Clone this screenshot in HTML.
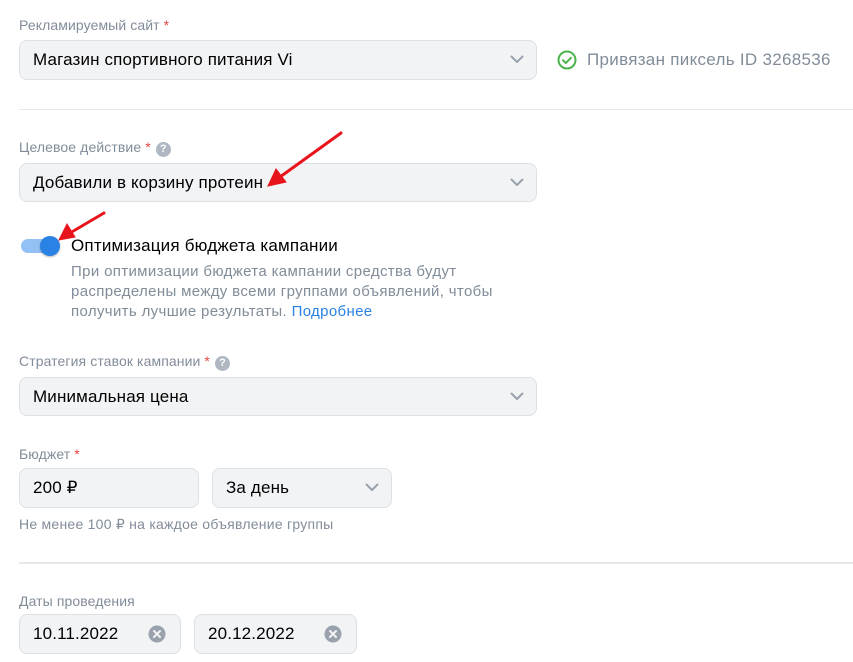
<!DOCTYPE html>
<html><head><meta charset="utf-8"><style>
body{margin:0;width:853px;height:662px;background:#fff;font-family:"Liberation Sans",sans-serif;position:relative;overflow:hidden}
.a{position:absolute}
.lbl{font-size:14px;color:#818c99;white-space:nowrap;letter-spacing:0.1px}
.req{color:#e64646}
.box{position:absolute;box-sizing:border-box;background:#f2f3f5;border:1px solid #dce1e6;border-radius:8px;font-size:17px;letter-spacing:0.15px;color:#000;padding-left:13px;display:flex;align-items:center}
.chev{position:absolute;right:12px;top:50%;margin-top:-5px}
.q{display:inline-block;width:15px;height:15px;border-radius:50%;background:#aeb7c2;color:#fff;font-size:11px;font-weight:bold;text-align:center;line-height:15px;vertical-align:0px;margin-left:5px;letter-spacing:0}
.x{position:absolute;right:14px;top:50%;margin-top:-9px}
.div{position:absolute;left:19px;right:0;height:1px;background:#e7e8ec}
</style></head><body>
<div class="a lbl" style="left:19px;top:17px">Рекламируемый сайт <span class="req">*</span></div>
<div class="box" style="left:19px;top:40px;width:518px;height:40px">Магазин спортивного питания Vi<svg class="chev" width="14" height="9" viewBox="0 0 14 9"><path d="M1.5 1.5L7 7l5.5-5.5" fill="none" stroke="#99a2ad" stroke-width="2" stroke-linecap="round" stroke-linejoin="round"/></svg></div>
<svg class="a" style="left:557px;top:50px" width="20" height="20" viewBox="0 0 20 20"><circle cx="10" cy="10" r="8.5" fill="none" stroke="#4bb34b" stroke-width="2"/><path d="M6 10.2l2.8 2.8L14 7.8" fill="none" stroke="#4bb34b" stroke-width="2" stroke-linecap="round" stroke-linejoin="round"/></svg>
<div class="a" style="left:587px;top:50px;font-size:17px;letter-spacing:0.3px;color:#818c99;white-space:nowrap">Привязан пиксель ID 3268536</div>
<div class="div" style="top:109px"></div>
<div class="a lbl" style="left:19px;top:139px">Целевое действие <span class="req">*</span><span class="q">?</span></div>
<div class="box" style="left:19px;top:163px;width:518px;height:39px">Добавили в корзину протеин<svg class="chev" width="14" height="9" viewBox="0 0 14 9"><path d="M1.5 1.5L7 7l5.5-5.5" fill="none" stroke="#99a2ad" stroke-width="2" stroke-linecap="round" stroke-linejoin="round"/></svg></div>
<div class="a" style="left:21px;top:239px;width:36px;height:14px;border-radius:7px;background:#93c1f5"></div>
<div class="a" style="left:40px;top:236px;width:20px;height:20px;border-radius:50%;background:#2a82e4;box-shadow:0 1px 2px rgba(0,0,0,.3)"></div>
<div class="a" style="left:71px;top:236px;font-size:17px;letter-spacing:0.2px;color:#000;white-space:nowrap">Оптимизация бюджета кампании</div>
<div class="a" style="left:71px;top:262px;font-size:15px;letter-spacing:0.35px;line-height:20px;color:#818c99;width:450px">При оптимизации бюджета кампании средства будут распределены между всеми группами объявлений, чтобы получить лучшие результаты. <span style="color:#2a82e4">Подробнее</span></div>
<svg class="a" style="left:0;top:0" width="853" height="662"><g fill="#e8141c" stroke="#e8141c" stroke-width="3" stroke-linecap="round"><line x1="341" y1="133" x2="280" y2="177"/><path d="M268 186l8-17 10 13z" stroke-width="1"/><line x1="104" y1="213" x2="70" y2="233"/><path d="M59 240l8-16 8 13z" stroke-width="1"/></g></svg>
<div class="a lbl" style="left:19px;top:353px">Стратегия ставок кампании <span class="req">*</span><span class="q">?</span></div>
<div class="box" style="left:19px;top:377px;width:518px;height:39px">Минимальная цена<svg class="chev" width="14" height="9" viewBox="0 0 14 9"><path d="M1.5 1.5L7 7l5.5-5.5" fill="none" stroke="#99a2ad" stroke-width="2" stroke-linecap="round" stroke-linejoin="round"/></svg></div>
<div class="a lbl" style="left:19px;top:446px">Бюджет <span class="req">*</span></div>
<div class="box" style="left:19px;top:468px;width:180px;height:40px">200 ₽</div>
<div class="box" style="left:212px;top:468px;width:180px;height:40px">За день<svg class="chev" width="14" height="9" viewBox="0 0 14 9"><path d="M1.5 1.5L7 7l5.5-5.5" fill="none" stroke="#99a2ad" stroke-width="2" stroke-linecap="round" stroke-linejoin="round"/></svg></div>
<div class="a" style="left:19px;top:516px;font-size:14px;letter-spacing:0.25px;color:#818c99;white-space:nowrap">Не менее 100 ₽ на каждое объявление группы</div>
<div class="div" style="top:562px;height:2px"></div>
<div class="a lbl" style="left:19px;top:593px">Даты проведения</div>
<div class="box" style="left:19px;top:614px;width:162px;height:40px">10.11.2022<svg class="x" width="18" height="18" viewBox="0 0 18 18"><circle cx="9" cy="9" r="8.5" fill="#99a2ad"/><path d="M6 6l6 6M12 6l-6 6" stroke="#f2f3f5" stroke-width="2" stroke-linecap="round"/></svg></div>
<div class="box" style="left:194px;top:614px;width:163px;height:40px">20.12.2022<svg class="x" width="18" height="18" viewBox="0 0 18 18"><circle cx="9" cy="9" r="8.5" fill="#99a2ad"/><path d="M6 6l6 6M12 6l-6 6" stroke="#f2f3f5" stroke-width="2" stroke-linecap="round"/></svg></div>
</body></html>
